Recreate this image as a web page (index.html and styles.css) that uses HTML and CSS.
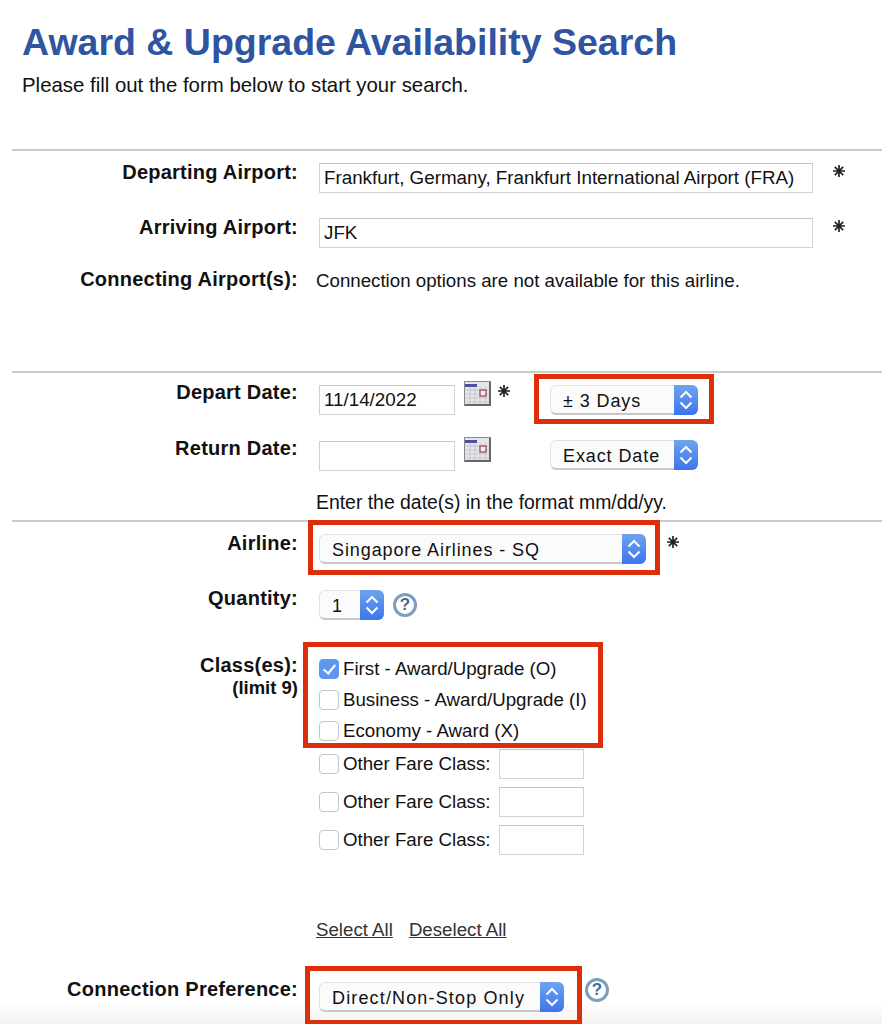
FILE: index.html
```html
<!DOCTYPE html>
<html lang="en">
<head>
  <meta charset="UTF-8" />
  <meta name="viewport" content="width=device-width, initial-scale=1.0"/>
  <title>Award &amp; Upgrade Availability Search</title>
  <link rel="stylesheet" href="styles.css">
</head>
<body>

  <svg class="defs" width="0" height="0">
    <symbol id="cal" viewBox="0 0 27 25">
      <rect x="0" y="0" width="27" height="25" fill="#8a8a8a"/>
      <rect x="1" y="1" width="25" height="23" fill="#e6e6ea"/>
      <rect x="1" y="3" width="12" height="3" fill="#4f4fa8"/>
      <path d="M1 9h25M1 13h25M1 17h25M1 21h25M6 6v18M11 6v18M16 6v18M21 6v18" stroke="#c6c6d0" stroke-width="1"/>
      <rect x="16" y="9" width="6" height="6" fill="#eee" stroke="#a8545c" stroke-width="1.4"/>
      <path d="M26 1v23H1" fill="none" stroke="#666" stroke-width="2"/>
    </symbol>
    <symbol id="chev" viewBox="0 0 24 30">
      <path d="M6.500 12.500 12 7l5.500 5.500M6.500 17.500 12 23l5.500-5.500" fill="none" stroke="#fff" stroke-width="2"/>
    </symbol>
    <symbol id="star" viewBox="0 0 12 12">
      <path d="M6 0v12M0 6h12M1.800 1.800l8.400 8.400M10.200 1.800l-8.400 8.400" stroke="#222" stroke-width="1.700"/>
    </symbol>
  </svg>

  <h1>Award &amp; Upgrade Availability Search</h1>
  <p class="intro">Please fill out the form below to start your search.</p>

  <form>
    <div class="secao secao1">
      <div class="linha">
        <label>Departing Airport:</label>
        <div class="campo">
          <input class="txt largo" type="text" value="Frankfurt, Germany, Frankfurt International Airport (FRA)">
          <svg class="req req-largo"><use href="#star"/></svg>
        </div>
      </div>
      <div class="linha">
        <label>Arriving Airport:</label>
        <div class="campo">
          <input class="txt largo" type="text" value="JFK">
          <svg class="req req-largo"><use href="#star"/></svg>
        </div>
      </div>
      <div class="linha linha-conn">
        <label>Connecting Airport(s):</label>
        <div class="texto texto-conn">Connection options are not available for this airline.</div>
      </div>
    </div>

    <div class="secao secao2">
      <div class="linha">
        <label>Depart Date:</label>
        <div class="campo">
          <input class="txt data" type="text" value="11/14/2022">
          <svg class="cal"><use href="#cal"/></svg>
          <svg class="req req-data"><use href="#star"/></svg>
          <div class="sel sel-dias marca marca-dias">
            <span>± 3 Days</span>
            <i><svg><use href="#chev"/></svg></i>
          </div>
        </div>
      </div>
      <div class="linha">
        <label>Return Date:</label>
        <div class="campo">
          <input class="txt data" type="text">
          <svg class="cal"><use href="#cal"/></svg>
          <div class="sel sel-dias sel-exact">
            <span>Exact Date</span>
            <i><svg><use href="#chev"/></svg></i>
          </div>
        </div>
      </div>
      <div class="texto texto-data">Enter the date(s) in the format mm/dd/yy.</div>
    </div>

    <div class="secao secao3">
      <div class="linha">
        <label>Airline:</label>
        <div class="campo">
          <div class="sel sel-airline marca marca-airline">
            <span>Singapore Airlines - SQ</span>
            <i><svg><use href="#chev"/></svg></i>
          </div>
          <svg class="req req-airline"><use href="#star"/></svg>
        </div>
      </div>
      <div class="linha">
        <label>Quantity:</label>
        <div class="campo">
          <div class="sel sel-qtd">
            <span>1</span>
            <i><svg><use href="#chev"/></svg></i>
          </div>
          <span class="ajuda">?</span>
        </div>
      </div>
      <div class="linha linha-classes">
        <label>Class(es):<small>(limit 9)</small></label>
        <div class="classes">
          <div class="grupo marca marca-classes">
            <div class="opcao"><input type="checkbox" checked><span>First - Award/Upgrade (O)</span></div>
            <div class="opcao"><input type="checkbox"><span>Business - Award/Upgrade (I)</span></div>
            <div class="opcao"><input type="checkbox"><span>Economy - Award (X)</span></div>
          </div>
          <div class="outro"><input type="checkbox"><span>Other Fare Class:</span><input class="txt fare" type="text"></div>
          <div class="outro"><input type="checkbox"><span>Other Fare Class:</span><input class="txt fare" type="text"></div>
          <div class="outro"><input type="checkbox"><span>Other Fare Class:</span><input class="txt fare" type="text"></div>
        </div>
      </div>
      <div class="links">
        <a href="#">Select All</a>
        <a href="#">Deselect All</a>
      </div>
      <div class="linha linha-pref">
        <label>Connection Preference:</label>
        <div class="campo">
          <div class="sel sel-conn marca marca-conn">
            <span>Direct/Non-Stop Only</span>
            <i><svg><use href="#chev"/></svg></i>
          </div>
          <span class="ajuda ajuda-conn">?</span>
        </div>
      </div>
    </div>
  </form>

</body>
</html>
```

FILE: styles.css
```css
body {
  font-family: "Liberation Sans", Arial, sans-serif;
  font-size: 18.7px;
  margin: 0;
  height: 1024px;
  overflow: hidden;
  background: linear-gradient(#fff 1000px, #f3f3f3 1024px);
  color: #111;
}

.defs {
  display: block;
  height: 0;
}

h1 {
  margin: 0;
  padding: 20px 0 0 22px;
  font-size: 37.5px;
  line-height: 44px;
  color: #2f54a2;
}

.intro {
  margin: 0;
  padding: 8px 0 0 22px;
  font-size: 20.4px;
  line-height: 26px;
}

form {
  margin: 51px 0 0 12px;
}

.secao {
  border-top: 2px solid #c9c9c9;
}

.secao1 { height: 208px; padding-top: 12px; }
.secao2 { height: 146px; padding-top: 1px; }

.linha {
  display: grid;
  grid-template-columns: 286px 1fr;
  column-gap: 21px;
  height: 55px;
}

label {
  display: block;
  text-align: right;
  font-size: 20px;
  font-weight: bold;
  letter-spacing: 0.24px;
  line-height: 20px;
}

label small {
  display: block;
  margin-top: 3px;
  font-size: 18.5px;
  letter-spacing: 0;
}

.secao1 label { margin-top: -1px; }
.secao2 label { padding-top: 8px; }
.secao2 .linha { height: 56px; }
.secao3 label { padding-top: 11px; }
.secao3 .linha-classes label { padding-top: 24px; }
.secao3 .linha-pref label { padding-top: 18px; }

.linha-conn { margin-top: -3px; }

.campo {
  display: flex;
  align-items: flex-start;
  position: relative;
}

.txt {
  box-sizing: border-box;
  height: 30px;
  margin: 0;
  padding: 0 4px;
  border: 1px solid #d2d2d2;
  border-top-color: #c4c4c4;
  font: 18.8px "Liberation Sans", Arial, sans-serif;
  color: #111;
  background: #fff;
}

.largo { width: 494px; }
.data { width: 136px; margin-top: 11px; }
.fare { width: 85px; }

.req {
  flex: none;
  width: 12px;
  height: 12px;
}

.req-largo { margin: 2px 2px 0 20px; }
.req-data { margin: 11px 0 0 7px; }
.req-airline { margin: 14px 0 0 21px; }

.cal {
  width: 27px;
  height: 25px;
  margin: 7px 0 0 9px;
}

.texto {
  line-height: 24px;
}

.texto-conn { margin-top: -1px; margin-left: -3px; }
.texto-data { margin: 4px 0 0 304px; font-size: 19.4px; }

.sel {
  box-sizing: border-box;
  display: flex;
  justify-content: space-between;
  height: 30px;
  border: 1px solid #e2e2e2;
  border-bottom: 2px solid #c8c8c8;
  border-radius: 6px;
  background: #fbfbfb;
  font-size: 18px;
  letter-spacing: 0.9px;
  line-height: 28px;
  position: relative;
}

.sel span {
  padding: 1px 0 0 12px;
  white-space: nowrap;
}

.sel i {
  flex: none;
  width: 24px;
  margin: -1px -1px -2px 0;
  border-radius: 0 6px 6px 0;
  background: linear-gradient(#6fa3ee, #3c75ee);
}

.sel i svg {
  display: block;
  width: 24px;
  height: 30px;
}

.sel-dias { width: 148px; margin: 11px 0 0 40px; }
.sel-exact { margin: 10px 0 0 59px; }
.sel-airline { width: 327px; margin-top: 12px; }
.sel-qtd { width: 65px; margin-top: 13px; }
.sel-conn { width: 245px; margin-top: 21px; letter-spacing: 1.15px; }

.ajuda {
  box-sizing: border-box;
  width: 24px;
  height: 24px;
  margin: 16px 0 0 9px;
  border: 3px solid #7d9cbe;
  border-radius: 50%;
  color: #456a98;
  font-weight: bold;
  font-size: 17px;
  line-height: 18px;
  letter-spacing: 0;
  text-align: center;
}

.ajuda-conn { margin: 17px 0 0 21px; }

/* red annotation frames */
.marca::after {
  content: "";
  position: absolute;
  border: 5px solid #dc2e0a;
  pointer-events: none;
}

.marca-dias::after { inset: -12px -17px -11px -17px; }
.marca-airline::after { inset: -15px -15px -13px -12px; }
.marca-classes::after { inset: -11px -1px -2px -16px; }
.marca-conn::after { inset: -17px -19px -15px -15px; }

.linha-classes {
  height: 287px;
  margin-top: -1px;
}

.grupo {
  position: relative;
  margin: 22px 0 -1px;
  width: 283px;
}

.opcao, .outro {
  display: flex;
  align-items: center;
  gap: 4px;
}

.opcao { height: 31px; }

.outro { height: 38px; }
.outro .fare { margin-left: 5px; }

input[type="checkbox"] {
  appearance: none;
  box-sizing: border-box;
  flex: none;
  width: 20px;
  height: 20px;
  margin: 0;
  border: 1px solid #c6c6c6;
  border-radius: 4px;
  background: #fff;
}

input[type="checkbox"]:checked {
  border-color: #5f97ef;
  background-color: #5f97ef;
  position: relative;
}

input[type="checkbox"]:checked::after {
  content: "";
  position: absolute;
  left: 6px;
  top: 2px;
  width: 5px;
  height: 10px;
  border: solid #fff;
  border-width: 0 2px 2px 0;
  transform: rotate(40deg);
}

.links {
  display: flex;
  gap: 16px;
  margin-left: 304px;
  height: 43px;
  line-height: 24px;
}

.links a {
  color: #333;
}
```
